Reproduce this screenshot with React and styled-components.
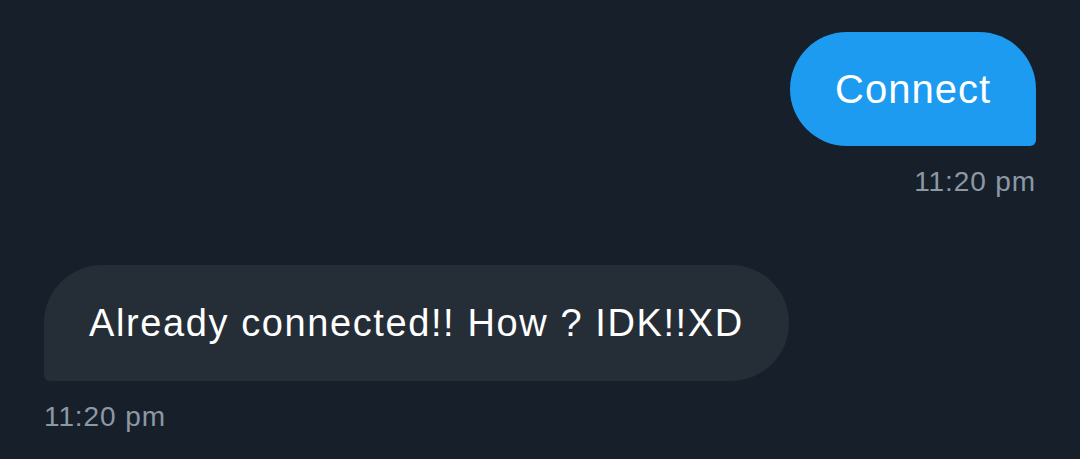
import React from "react";
import styled, { createGlobalStyle } from "styled-components";

const Global = createGlobalStyle`
  html, body {
    margin: 0;
    padding: 0;
    background: #17202a;
  }
  body {
    font-family: "Liberation Sans", Arial, sans-serif;
  }
`;

const Thread = styled.div`
  width: 1080px;
  height: 459px;
  box-sizing: border-box;
  padding: 32px 44px 0;
  display: flex;
  flex-direction: column;
  background: #17202a;
  overflow: hidden;
`;

const Group = styled.div`
  display: flex;
  flex-direction: column;
  align-items: ${(p) => (p.$mine ? "flex-end" : "flex-start")};
  margin-bottom: ${(p) => p.$gap || 0}px;
`;

const Bubble = styled.div`
  box-sizing: border-box;
  height: ${(p) => (p.$mine ? 114 : 116)}px;
  display: flex;
  align-items: center;
  padding: 0 45px;
  background: ${(p) => (p.$mine ? "#1d9bf0" : "#252e37")};
  color: #ffffff;
  font-size: ${(p) => (p.$mine ? 40 : 38)}px;
  letter-spacing: ${(p) => (p.$mine ? 1 : 1.6)}px;
  border-radius: ${(p) => (p.$mine ? "57px 57px 6px 57px" : "58px 58px 58px 6px")};
`;

const Time = styled.div`
  margin-top: ${(p) => p.$top}px;
  color: #8b98a5;
  font-size: 28px;
  line-height: 32px;
  letter-spacing: 0.9px;
`;

export default function App() {
  return (
    <>
      <Global />
      <Thread>
        <Group $mine $gap={67}>
          <Bubble $mine>Connect</Bubble>
          <Time $top={20}>11:20 pm</Time>
        </Group>
        <Group>
          <Bubble>Already connected!! How ? IDK!!XD</Bubble>
          <Time $top={20}>11:20 pm</Time>
        </Group>
      </Thread>
    </>
  );
}
